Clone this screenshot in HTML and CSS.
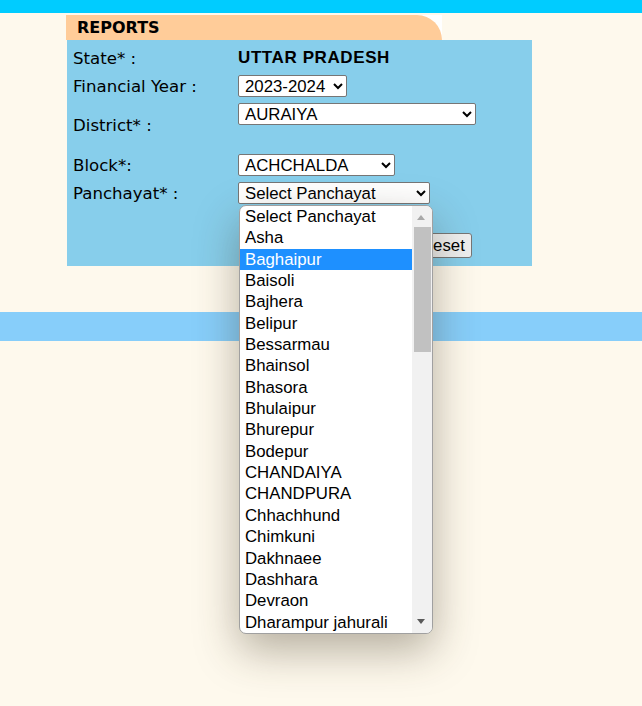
FILE: index.html
```html
<!DOCTYPE html>
<html>
	<head>
		<meta charset="UTF-8">
		<title>Reports</title>
		<link rel="stylesheet" href="styles.css">
	</head>
	<body>
		<div class="topbar"></div>

		<div class="tab"><div class="tab-in">REPORTS</div></div>

		<div class="panel">
			<div class="row">
				<span class="lbl">State* :</span>
				<b class="state">UTTAR PRADESH</b>
			</div>
			<div class="row">
				<span class="lbl">Financial Year :</span>
				<select class="sel sel-fy"><option>2023-2024</option></select>
			</div>
			<div class="row row-tall">
				<span class="lbl">District* :</span>
				<select class="sel sel-dist"><option>AURAIYA</option></select>
			</div>
			<div class="row">
				<span class="lbl">Block*:</span>
				<select class="sel sel-block"><option>ACHCHALDA</option></select>
			</div>
			<div class="row">
				<span class="lbl">Panchayat* :</span>
				<div class="pick">
					<select class="sel sel-panch"><option>Select Panchayat</option></select>

					<!-- opened list of the panchayat select -->
					<div class="drop">
						<ul class="opts">
							<li>Select Panchayat</li>
							<li>Asha</li>
							<li class="on">Baghaipur</li>
							<li>Baisoli</li>
							<li>Bajhera</li>
							<li>Belipur</li>
							<li>Bessarmau</li>
							<li>Bhainsol</li>
							<li>Bhasora</li>
							<li>Bhulaipur</li>
							<li>Bhurepur</li>
							<li>Bodepur</li>
							<li>CHANDAIYA</li>
							<li>CHANDPURA</li>
							<li>Chhachhund</li>
							<li>Chimkuni</li>
							<li>Dakhnaee</li>
							<li>Dashhara</li>
							<li>Devraon</li>
							<li>Dharampur jahurali</li>
						</ul>
						<div class="sbar">
							<span class="arr arr-up"></span>
							<span class="thumb"></span>
							<span class="arr arr-down"></span>
						</div>
					</div>
				</div>
			</div>
			<div class="btnrow">
				<button class="btn" type="button">Reset</button>
			</div>
		</div>

		<div class="bottombar"></div>
	</body>
</html>
```

FILE: styles.css
```css
* {
	margin: 0;
	padding: 0;
	box-sizing: border-box;
}
ul, li {
	list-style: none;
}

html, body {
	min-height: 706px;
}

body {
	background: #fef9ed;
	font-family: "DejaVu Sans", Verdana, sans-serif;
	font-size: 16.6px;
	color: #000;
}

.topbar {
	height: 13px;
	background: #00ccff;
}

/* tab on top of the panel */
.tab {
	width: 376px;
	height: 25px;
	margin: 2px 0 0 66px;
	background: #fff;
}
.tab-in {
	height: 25px;
	line-height: 25px;
	padding-left: 11px;
	background: #ffcc99;
	border-top-right-radius: 25px;
	font-weight: bold;
	font-size: 16px;
}

.panel {
	width: 465px;
	margin-left: 67px;
	padding: 7px 0 8px 6px;
	background: #87ceeb;
	display: flex;
	flex-direction: column;
	gap: 6px;
}

.row {
	display: flex;
	align-items: center;
	height: 22px;
}
.row-tall {
	height: 45px;
	align-items: flex-start;
}
.row-tall .lbl {
	align-self: center;
}

.lbl {
	width: 165px;
	flex: none;
}

.state {
	font-family: "Liberation Sans", Arial, sans-serif;
	font-size: 17px;
	letter-spacing: 0.6px;
}

.sel {
	height: 22px;
	font-family: "Liberation Sans", Arial, sans-serif;
	font-size: 16.8px;
	color: #000;
	background: #fff;
	border: 1px solid #767676;
	border-radius: 2px;
	padding-left: 2px;
}
.sel-fy { width: 109px; }
.sel-dist { width: 238px; }
.sel-block { width: 157px; }
.sel-panch { width: 192px; }

.pick {
	position: relative;
}

/* the open list */
.drop {
	position: absolute;
	left: 1px;
	top: 23px;
	width: 194px;
	height: 429px;
	display: flex;
	background: #fff;
	border: 1px solid #a0a0a0;
	border-radius: 7px;
	overflow: hidden;
	box-shadow: 0 16px 44px rgba(60, 50, 30, 0.38);
	z-index: 5;
}
.opts {
	flex: 1;
	font-family: "Liberation Sans", Arial, sans-serif;
	font-size: 16.8px;
}
.opts li {
	height: 21.35px;
	line-height: 21.35px;
	padding-left: 5px;
	white-space: nowrap;
}
.opts li.on {
	background: #1e90ff;
	color: #fff;
}

.sbar {
	width: 20px;
	flex: none;
	background: #f1f1f1;
	position: relative;
}
.thumb {
	position: absolute;
	left: 2px;
	right: 1px;
	top: 21px;
	height: 125px;
	background: #c1c1c1;
}
.arr {
	position: absolute;
	left: 5px;
	width: 0;
	height: 0;
	border-left: 4.5px solid transparent;
	border-right: 4.5px solid transparent;
}
.arr-up {
	top: 9px;
	border-bottom: 5px solid #a8a8a8;
}
.arr-down {
	bottom: 9px;
	border-top: 5px solid #5a5a5a;
}

.btnrow {
	margin-top: 23px;
	padding-left: 341px;
}
.btn {
	height: 25px;
	padding: 0 6px;
	font-family: "Liberation Sans", Arial, sans-serif;
	font-size: 16.8px;
	background: #efefef;
	border: 1px solid #767676;
	border-radius: 3px;
}

.bottombar {
	height: 29px;
	margin-top: 46px;
	background: #87cefa;
}
```
